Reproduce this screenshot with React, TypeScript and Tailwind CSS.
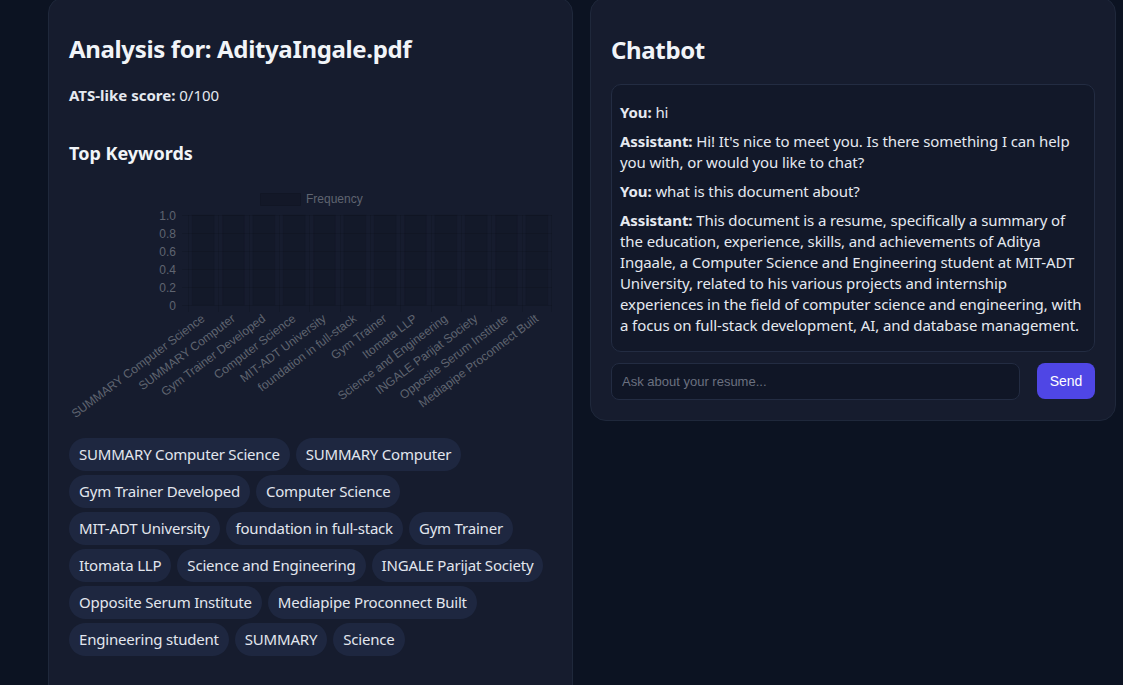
import React from 'react'

const keywords = [
  'SUMMARY Computer Science',
  'SUMMARY Computer',
  'Gym Trainer Developed',
  'Computer Science',
  'MIT-ADT University',
  'foundation in full-stack',
  'Gym Trainer',
  'Itomata LLP',
  'Science and Engineering',
  'INGALE Parijat Society',
  'Opposite Serum Institute',
  'Mediapipe Proconnect Built',
]

const chips = [...keywords, 'Engineering student', 'SUMMARY', 'Science']

const messages = [
  { role: 'You', text: 'hi' },
  { role: 'Assistant', text: "Hi! It's nice to meet you. Is there something I can help you with, or would you like to chat?" },
  { role: 'You', text: 'what is this document about?' },
  {
    role: 'Assistant',
    text: 'This document is a resume, specifically a summary of the education, experience, skills, and achievements of Aditya Ingaale, a Computer Science and Engineering student at MIT-ADT University, related to his various projects and internship experiences in the field of computer science and engineering, with a focus on full-stack development, AI, and database management.',
  },
]

// chart drawn in a 483x245 box; plot area x 119..483, y 30..120
function KeywordChart() {
  const left = 119
  const right = 483
  const top = 30
  const bottom = 120
  const step = (right - left) / keywords.length
  const ticks = ['1.0', '0.8', '0.6', '0.4', '0.2', '0']
  return (
    <svg width="483" height="245" className="block" style={{ fontFamily: '"Liberation Sans", Arial, sans-serif' }}>
      {/* legend */}
      <rect x="191.5" y="8.5" width="40" height="12" fill="rgba(0,0,0,0.12)" stroke="rgba(0,0,0,0.12)" />
      <text x="237" y="18" fontSize="12" fill="#5f6470">Frequency</text>

      {/* bars */}
      {keywords.map((k, i) => {
        const w = step * 0.72
        const x = left + step * i + (step - w) / 2
        return <rect key={k} x={x} y={top} width={w} height={bottom - top} fill="rgba(0,0,0,0.1)" stroke="rgba(0,0,0,0.05)" />
      })}

      {/* grid */}
      {ticks.map((t, i) => {
        const y = top + ((bottom - top) / 5) * i + 0.5
        return (
          <g key={t}>
            <line x1={left - 6} x2={right} y1={y} y2={y} stroke="rgba(0,0,0,0.1)" />
            <text x={left - 12} y={y + 4} fontSize="12" fill="#5f6470" textAnchor="end">{t}</text>
          </g>
        )
      })}
      {keywords.map((k, i) => {
        const x = Math.round(left + step * i) + 0.5
        return <line key={k} x1={x} x2={x} y1={top} y2={bottom + 7} stroke="rgba(0,0,0,0.1)" />
      })}
      <line x1={right - 0.5} x2={right - 0.5} y1={top} y2={bottom + 7} stroke="rgba(0,0,0,0.1)" />

      {/* x labels */}
      {keywords.map((k, i) => {
        const cx = left + step * (i + 0.5)
        return (
          <text
            key={k}
            x={cx}
            y={bottom + 16}
            fontSize="12"
            fill="#5f6470"
            textAnchor="end"
            transform={`rotate(-37 ${cx} ${bottom + 12})`}
          >
            {k}
          </text>
        )
      })}
    </svg>
  )
}

export default function App() {
  return (
    <div
      className="min-h-screen bg-[#0c1322] text-[#e5e9f0] overflow-hidden"
      style={{ fontFamily: '"Noto Sans", "Open Sans", sans-serif' }}
    >
      <div className="flex items-start gap-[17px] pl-[48px] -mt-[3px]">
        {/* analysis card */}
        <section className="w-[525px] shrink-0 rounded-2xl border border-[#1f283b] bg-[#161c2e] px-5 pt-[35px] pb-10">
          <h2 className="text-2xl font-bold text-[#f1f4f8] leading-8 tracking-[-0.35px]">Analysis for: AdityaIngale.pdf</h2>
          <p className="mt-[19px] text-[15px] leading-[22px]">
            <span className="font-bold">ATS-like score:</span> 0/100
          </p>
          <h3 className="mt-[34px] text-lg font-bold leading-[26px] text-[#f1f4f8]">Top Keywords</h3>
          <div className="mt-[19px]">
            <KeywordChart />
          </div>
          <div className="mt-[8px] flex flex-wrap gap-x-[6px] gap-y-[4px]">
            {chips.map((c) => (
              <span
                key={c}
                className="rounded-full bg-[#1e2740] px-[10px] h-[33px] flex items-center text-[15px] tracking-[-0.2px] text-[#e2e6ee]"
              >
                {c}
              </span>
            ))}
          </div>
          <div className="h-[40px]" />
        </section>

        {/* chatbot card */}
        <section className="w-[526px] shrink-0 rounded-2xl border border-[#1f283b] bg-[#161c2e] px-5 pt-[36px] pb-5">
          <h2 className="text-2xl font-bold text-[#f1f4f8] leading-8 tracking-[-0.35px]">Chatbot</h2>
          <div className="mt-[18px] rounded-[10px] border border-[#232c42] bg-[#121829] px-2 pt-[17px] pb-[15px] flex flex-col gap-[8px]">
            {messages.map((m, i) => (
              <p key={i} className="text-[15px] leading-[21px] tracking-[-0.1px]">
                <span className="font-bold">{m.role}:</span> {m.text}
              </p>
            ))}
          </div>
          <div className="mt-[11px] flex items-start gap-[17px]">
            <input
              placeholder="Ask about your resume..."
              className="flex-1 h-[37px] rounded-lg border border-[#232c42] bg-[#101626] px-[10px] text-[13px] text-[#e2e6ee] placeholder:text-[#6b7180] outline-none"
              style={{ fontFamily: '"Liberation Sans", Arial, sans-serif' }}
            />
            <button
              className="h-[36px] w-[58px] rounded-lg bg-[#4f46e5] text-[14px] text-white"
              style={{ fontFamily: '"Liberation Sans", Arial, sans-serif' }}
            >
              Send
            </button>
          </div>
        </section>
      </div>
    </div>
  )
}
